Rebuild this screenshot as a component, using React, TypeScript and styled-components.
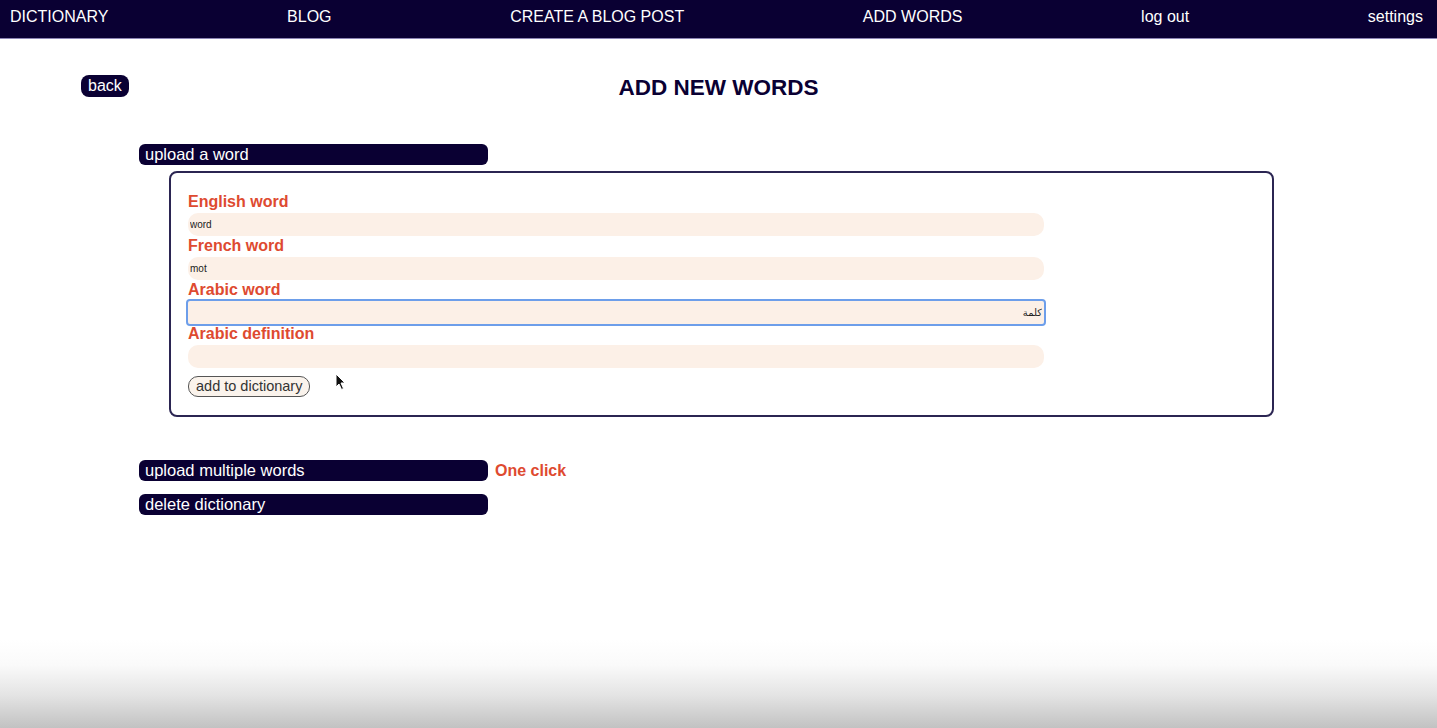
import React from 'react';
import styled, {createGlobalStyle} from 'styled-components';

const navy = '#0a0033';
const red = '#de4a30';
const field = '#fcf0e7';

const GlobalStyle = createGlobalStyle`
	html, body {
		margin: 0;
		padding: 0;
	}

	body {
		font-family: "Liberation Sans", Arial, sans-serif;
		background: #fff;
	}
`;

const Page = styled.div`
	position: relative;
	min-height: 728px;
	background: linear-gradient(to bottom, #fff 0, #fff 640px, #fafafa 665px, #e4e4e4 695px, #c2c2c2 728px);
`;

const Nav = styled.nav`
	display: flex;
	justify-content: space-between;
	align-items: center;
	height: 39px;
	padding: 0 14px 0 10px;
	background: ${navy};
	border-bottom: 1px solid #8c84b4;
	box-sizing: border-box;
`;

const NavLink = styled.a`
	color: #fff;
	font-size: 16px;
	text-decoration: none;
	margin-top: -5px;
`;

const Header = styled.div`
	display: grid;
	grid-template-columns: 1fr auto 1fr;
	align-items: center;
	padding: 32px 81px 0;
`;

const BackButton = styled.button`
	justify-self: start;
	height: 22px;
	padding: 0 7px;
	border: none;
	border-radius: 8px;
	background: ${navy};
	color: #fff;
	font-family: inherit;
	font-size: 16px;
	line-height: 22px;
`;

const Title = styled.h1`
	margin: 0;
	padding-top: 4px;
	color: ${navy};
	font-size: 22.5px;
	font-weight: 700;
`;

const Sections = styled.div`
	display: flex;
	flex-direction: column;
	padding: 43px 0 0 139px;
`;

const BarRow = styled.div<{$gap?: number}>`
	display: flex;
	align-items: center;
	gap: 7px;
	margin-top: ${p => p.$gap ?? 0}px;
`;

const Bar = styled.button`
	width: 349px;
	height: 21px;
	padding: 0 6px;
	border: none;
	border-radius: 6px;
	background: ${navy};
	color: #fff;
	font-family: inherit;
	font-size: 16.5px;
	line-height: 21px;
	text-align: left;
`;

const Note = styled.span`
	color: ${red};
	font-size: 16px;
	font-weight: 700;
`;

const Card = styled.form`
	display: flex;
	flex-direction: column;
	width: 1105px;
	margin: 6px 0 0 30px;
	padding: 20px 17px 18px 17px;
	border: 2px solid #2b2552;
	border-radius: 8px;
	box-sizing: border-box;
`;

const Label = styled.label`
	color: ${red};
	font-size: 16px;
	font-weight: 700;
	line-height: 18px;
	margin: 1px 0 2px;

	&:first-child {
		margin-top: 0;
	}
`;

const Input = styled.input<{$focused?: boolean}>`
	width: 856px;
	height: 23px;
	padding: 0 2px;
	border: none;
	border-radius: ${p => (p.$focused ? '2px' : '10px')};
	background: ${field};
	color: #222;
	font-family: "Liberation Sans", "DejaVu Sans", sans-serif;
	font-size: 10px;
	box-sizing: border-box;
	outline: ${p => (p.$focused ? '2px solid #6d9eea' : 'none')};
	outline-offset: 0;
`;

const AddButton = styled.button`
	align-self: flex-start;
	height: 21px;
	margin-top: 8px;
	padding: 0 7px;
	border: 1px solid #555;
	border-radius: 10px;
	background: #faf3ec;
	color: #333;
	font-family: inherit;
	font-size: 14.5px;
	line-height: 19px;
`;

const Cursor = styled.svg`
	position: absolute;
	left: 335px;
	top: 373px;
`;

export default function App() {
	return (
		<Page>
			<GlobalStyle/>
			<Nav>
				<NavLink>DICTIONARY</NavLink>
				<NavLink>BLOG</NavLink>
				<NavLink>CREATE A BLOG POST</NavLink>
				<NavLink>ADD WORDS</NavLink>
				<NavLink>log out</NavLink>
				<NavLink>settings</NavLink>
			</Nav>

			<Header>
				<BackButton>back</BackButton>
				<Title>ADD NEW WORDS</Title>
				<span/>
			</Header>

			<Sections>
				<BarRow>
					<Bar>upload a word</Bar>
				</BarRow>
				<Card onSubmit={e => e.preventDefault()}>
					<Label>English word</Label>
					<Input defaultValue="word"/>
					<Label>French word</Label>
					<Input defaultValue="mot"/>
					<Label>Arabic word</Label>
					<Input $focused dir="rtl" defaultValue="كلمة"/>
					<Label>Arabic definition</Label>
					<Input/>
					<AddButton type="button">add to dictionary</AddButton>
				</Card>

				<BarRow $gap={43}>
					<Bar>upload multiple words</Bar>
					<Note>One click</Note>
				</BarRow>
				<BarRow $gap={13}>
					<Bar>delete dictionary</Bar>
				</BarRow>
			</Sections>

			<Cursor width="12" height="18" viewBox="0 0 12 18">
				<path d="M1 1 L1 14 L4 11 L6.5 16.5 L8.5 15.5 L6 10 L10 10 Z" fill="#111" stroke="#fff" strokeWidth="1"/>
			</Cursor>
		</Page>
	);
}
